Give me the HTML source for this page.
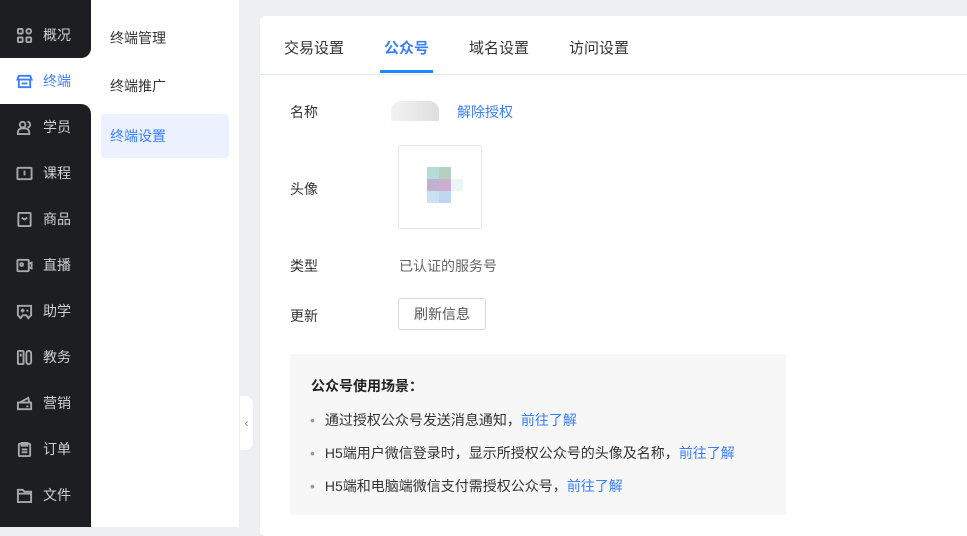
<!DOCTYPE html>
<html><head><meta charset="utf-8"><style>
*{margin:0;padding:0;box-sizing:border-box}
body{width:967px;height:527px;overflow:hidden;background:#eeeff2;font-family:"Liberation Sans","Noto Sans CJK SC",sans-serif;font-size:14px;color:#333;position:relative}
.side{position:absolute;left:0;top:0;width:91px;height:527px;background:#fff}
.it{position:absolute;left:0;width:91px;height:46px;background:#1d1e22;color:#d0d0d3;display:flex;align-items:center;padding-left:16px}
.it svg{width:17px;height:17px;margin-right:10px;fill:none;stroke:#a8a8ac;stroke-width:2}
.it.act{background:#fff;color:#3a7fff}
.it.act svg{stroke:#3a7fff}
.sub{position:absolute;left:91px;top:0;width:148px;height:527px;background:#fff}
.sub div{position:absolute;left:10px;width:128px;height:44px;line-height:44px;padding-left:9px;border-radius:4px;color:#333}
.card{position:absolute;left:260px;top:16px;width:720px;height:520px;background:#fff;border-radius:6px}
.tabs{position:absolute;left:0;top:0;right:0;height:59px;border-bottom:1px solid #e6e7ea}
.tab{position:absolute;top:21px;font-size:15px;color:#333}
.lbl{position:absolute;left:30px;color:#333}
a{color:#3a7fff;text-decoration:none}
</style></head><body>
<div class="side">
<div class="it" style="top:0;height:12px"></div>
<div class="it" style="top:12px;height:46px;border-bottom-right-radius:10px"><svg viewBox="0 0 18 18"><rect x="2" y="2" width="5" height="5" rx="1"/><rect x="11" y="2" width="5" height="5" rx="2.5"/><rect x="2" y="11" width="5" height="5" rx="1"/><rect x="11" y="11" width="5" height="5" rx="1"/></svg>概况</div>
<div class="it act" style="top:58px"><svg viewBox="0 0 18 18"><path d="M3 3h12l1.5 4H1.5z"/><path d="M3 7v8h12V7M6 11h6"/></svg>终端</div>
<div class="it" style="top:104px;border-top-right-radius:10px"><svg viewBox="0 0 18 18"><circle cx="7" cy="6" r="3"/><path d="M2 16v-2a4 4 0 0 1 4-4h4a4 4 0 0 1 4 4v2zM12 3a3 3 0 0 1 0 6"/></svg>学员</div>
<div class="it" style="top:150px"><svg viewBox="0 0 18 18"><rect x="1.5" y="3" width="15" height="12" rx="1"/><path d="M9 6v5"/></svg>课程</div>
<div class="it" style="top:196px"><svg viewBox="0 0 18 18"><rect x="2.5" y="2" width="13" height="14" rx="1"/><path d="M6 7l3 2 3-2"/></svg>商品</div>
<div class="it" style="top:242px"><svg viewBox="0 0 18 18"><rect x="1.5" y="3" width="12" height="12" rx="1"/><circle cx="6" cy="8" r="1.5"/><path d="M13.5 7l3-1v6l-3-1"/></svg>直播</div>
<div class="it" style="top:288px"><svg viewBox="0 0 18 18"><path d="M2 3h14v10l-3 3-2-3H7l-2 3-3-3z"/><path d="M5 8h4M7 6v4M12 7v2"/></svg>助学</div>
<div class="it" style="top:334px"><svg viewBox="0 0 18 18"><rect x="2" y="2" width="6" height="14" rx="1"/><rect x="11" y="2" width="5" height="14" rx="2.5"/><path d="M5 5v3"/></svg>教务</div>
<div class="it" style="top:380px"><svg viewBox="0 0 18 18"><path d="M2 8h14v7H2zM4 8l9-5 1 5"/><path d="M12 11v2"/></svg>营销</div>
<div class="it" style="top:426px"><svg viewBox="0 0 18 18"><rect x="3" y="3" width="12" height="13" rx="1"/><path d="M6 2h6v3H6zM6 9h6M6 12h6"/></svg>订单</div>
<div class="it" style="top:472px"><svg viewBox="0 0 18 18"><path d="M2 3h5l2 2h7v11H2z"/><path d="M2 7h14"/></svg>文件</div>
<div class="it" style="top:518px;height:9px"></div>
</div>
<div class="sub">
<div style="top:16px">终端管理</div>
<div style="top:64px">终端推广</div>
<div style="top:114px;background:#ebf1ff;color:#3a7fff">终端设置</div>
</div>
<div style="position:absolute;left:240px;top:396px;width:13px;height:54px;background:#fff;border-radius:0 8px 8px 0;color:#888;font-size:12px;line-height:54px;text-align:center">‹</div>
<div class="card">
<div class="tabs">
<div class="tab" style="left:24px">交易设置</div>
<div class="tab" style="left:124px;color:#3a7fff;font-weight:bold">公众号</div>
<div style="position:absolute;left:120px;top:54px;width:53px;height:3px;background:#1c87ff"></div>
<div class="tab" style="left:209px">域名设置</div>
<div class="tab" style="left:309px">访问设置</div>
</div>
<div class="lbl" style="top:86px">名称</div>
<div style="position:absolute;left:131px;top:85px;width:48px;height:20px;background:linear-gradient(90deg,#f0f0f0,#e4e4e4,#d8d8d8);border-radius:10px 10px 0 0;opacity:.85"></div>
<a style="position:absolute;left:197px;top:86px">解除授权</a>
<div class="lbl" style="top:163px">头像</div>
<div style="position:absolute;left:138px;top:129px;width:84px;height:84px;border:1px solid #e8e8e8;border-radius:2px">
<div style="position:absolute;left:28px;top:21px;width:12px;height:12px;background:#b3ddd8"></div>
<div style="position:absolute;left:40px;top:21px;width:12px;height:12px;background:#b4d0c0"></div>
<div style="position:absolute;left:28px;top:33px;width:12px;height:12px;background:#c1b0d0"></div>
<div style="position:absolute;left:40px;top:33px;width:12px;height:12px;background:#ceadd1"></div>
<div style="position:absolute;left:52px;top:33px;width:12px;height:12px;background:#eaf6f6"></div>
<div style="position:absolute;left:28px;top:45px;width:12px;height:12px;background:#cce0f3"></div>
<div style="position:absolute;left:40px;top:45px;width:12px;height:12px;background:#bdd7ee"></div>
</div>
<div class="lbl" style="top:240px">类型</div>
<div style="position:absolute;left:139px;top:240px;color:#666">已认证的服务号</div>
<div class="lbl" style="top:290px">更新</div>
<div style="position:absolute;left:138px;top:282px;width:88px;height:32px;border:1px solid #d8d8d8;border-radius:3px;text-align:center;line-height:30px;color:#555">刷新信息</div>
<div style="position:absolute;left:30px;top:338px;width:496px;height:161px;background:#f7f7f8">
<div style="position:absolute;left:21px;top:22px;font-weight:bold;color:#222">公众号使用场景：</div>
<div style="position:absolute;left:20px;top:50px;line-height:33px;color:#333"><span style="color:#999;margin-right:10px">•</span>通过授权公众号发送消息通知，<a>前往了解</a><br><span style="color:#999;margin-right:10px">•</span>H5端用户微信登录时，显示所授权公众号的头像及名称，<a>前往了解</a><br><span style="color:#999;margin-right:10px">•</span>H5端和电脑端微信支付需授权公众号，<a>前往了解</a></div>
</div>
</div>
</body></html>
